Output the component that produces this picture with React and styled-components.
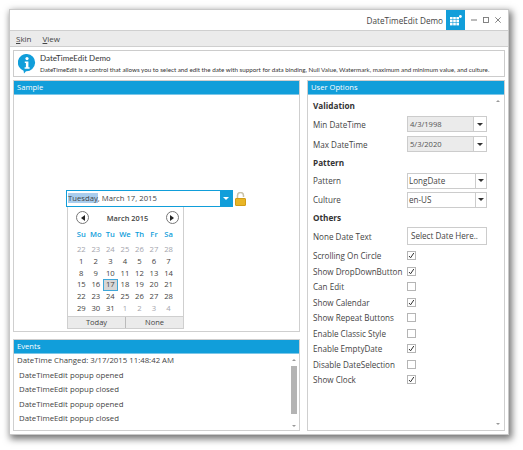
import React from 'react';
import styled, { createGlobalStyle } from 'styled-components';

const Global = createGlobalStyle`
  html, body { margin: 0; padding: 0; background: #fff; }
  body { font-family: "Open Sans", "Noto Sans", sans-serif; color: #3f3f3f; }
  * { box-sizing: border-box; }
`;
const Page = styled.div`width: 523px; height: 450px; padding: 9px 0 0 9px; overflow: hidden;`;
const Window = styled.div`
  width: 500px; height: 426px; background: #fff; border: 1px solid #c9c9c9;
  box-shadow: 2px 3px 7px 1px rgba(0,0,0,.55); display: flex; flex-direction: column;
`;
const TitleBar = styled.div`height: 20px; display: flex; align-items: center; justify-content: flex-end; flex: none;`;
const Title = styled.div`font-size: 8.2px; color: #444; margin-right: 3px; white-space: nowrap;`;
const SkinButton = styled.div`width: 19px; height: 20px; background: #119eda; display: flex; align-items: center; justify-content: center; margin-right: 6px;`;
const WinControls = styled.div`display: flex; align-items: center; gap: 6px; margin-right: 7px;`;
const MenuBar = styled.div`height: 17px; flex: none; background: #ebebeb; border-top: 1px solid #cfcfcf; border-bottom: 1px solid #cfcfcf; display: flex; gap: 11px; padding-left: 6px; align-items: center; font-size: 8px; color: #444;`;
const MenuKey = styled.span`text-decoration: underline; text-underline-offset: 1px;`;
const Content = styled.div`flex: 1; display: flex; flex-direction: column; padding: 3px; gap: 3px; min-height: 0;`;
const InfoBox = styled.div`height: 27px; flex: none; border: 1px solid #ccc; display: flex; align-items: center; padding-left: 4px; gap: 4px; overflow: hidden;`;
const InfoGlyph = styled.div`width: 18px; height: 20px; flex: none;`;
const InfoText = styled.div`display: flex; flex-direction: column; gap: 2px; white-space: nowrap; min-width: 0; font-family: "Lato", "Open Sans", sans-serif;`;
const InfoTitle = styled.div`font-size: 8px; line-height: 10px; color: #333;`;
const InfoDesc = styled.div`font-size: 6.26px; line-height: 9px; color: #333;`;
const Columns = styled.div`flex: 1; display: flex; gap: 7px; min-height: 0;`;
const LeftColumn = styled.div`width: 287px; display: flex; flex-direction: column; gap: 7px;`;
const Panel = styled.div`
  border: 1px solid #cfcfcf; display: flex; flex-direction: column; min-height: 0; overflow: hidden;
  ${p => p.$h ? `height: ${p.$h}px; flex: none;` : 'flex: 1;'}
`;
const PanelHead = styled.div`height: 14px; flex: none; background: #119eda; color: #fff; font-size: 7.6px; line-height: 13px; padding-left: 3px; border-bottom: 1px solid #7cc7e8;`;
const SampleBody = styled.div`flex: 1; padding: 95px 0 0 52px;`;
const DateRow = styled.div`display: flex; align-items: center; gap: 2px; height: 17px;`;
const DateInput = styled.div`width: 167px; height: 17px; border: 1px solid #119eda; display: flex; align-items: stretch;`;
const DateText = styled.div`flex: 1; font-size: 7.7px; line-height: 15px; padding-left: 1px; color: #444; white-space: nowrap;`;
const Selected = styled.span`background: #a9cdee;`;
const DateDrop = styled.div`width: 12px; background: #119eda; display: flex; align-items: center; justify-content: center;`;
const Arrow = styled.div`
  width: 0; height: 0; border-left: 3px solid transparent; border-right: 3px solid transparent;
  border-top: 3px solid ${p => p.$color || '#333'};
`;
const Popup = styled.div`margin-left: 1px; width: 117px; height: 122px; border: 1px solid #cfcfcf; border-top: none; display: flex; flex-direction: column;`;
const CalHead = styled.div`height: 21px; flex: none; display: flex; align-items: center; justify-content: space-between; padding: 0 4px 0 8px; font-size: 7.4px; font-weight: 600; color: #444;`;
const NavBtn = styled.div`width: 13px; height: 13px; border: 1px solid #777; border-radius: 50%; display: flex; align-items: center; justify-content: center;`;
const NavTri = styled.div`
  width: 0; height: 0; border-top: 3px solid transparent; border-bottom: 3px solid transparent;
  ${p => p.$left ? 'border-right: 4px solid #222;' : 'border-left: 4px solid #222;'}
`;
const CalGrid = styled.div`display: grid; grid-template-columns: repeat(7, 14.55px); grid-auto-rows: min-content; padding-left: 6px; flex: 1;`;
const DayName = styled.div`font-size: 7.6px; font-weight: 600; color: #119eda; text-align: center; height: 16px; line-height: 13px;`;
const Day = styled.div`
  font-size: 7.7px; text-align: center; height: 11.8px; line-height: 11.8px; color: ${p => p.$muted ? '#a5a5ad' : '#444'};
  ${p => p.$sel && 'background: #d6d6d6; outline: 1px solid #3fa7d8; outline-offset: -1px;'}
`;
const CalFoot = styled.div`height: 12px; flex: none; background: #ebebeb; border-top: 1px solid #cfcfcf; display: flex; font-size: 7.5px; line-height: 11px; color: #444;`;
const FootBtn = styled.div`flex: 1; text-align: center; & + & { border-left: 1px solid #bbb; }`;
const LogBody = styled.div`flex: 1; display: flex; min-height: 0; overflow: hidden;`;
const LogList = styled.div`flex: 1; overflow: hidden; padding-left: 3px; font-size: 7.8px; color: #444; white-space: nowrap;`;
const LogHead = styled.div`height: 14px; line-height: 12px;`;
const LogItem = styled.div`height: 14.25px; line-height: 14.25px; padding-left: 2px; ${p => p.$faded && 'opacity: .45;'}`;
const ScrollTrack = styled.div`width: 9px; margin-right: 1px; display: flex; flex-direction: column; align-items: center; flex: none; padding-top: 5px;`;
const ScrollThumb = styled.div`width: 6px; height: 48px; margin: 5px 0 11px; background: #b4b4b4;`;
const SmallUp = styled.div`width: 0; height: 0; border-left: 2px solid transparent; border-right: 2px solid transparent; border-bottom: 2px solid #999;`;
const SmallDown = styled(SmallUp)`border-bottom: none; border-top: 2px solid #999;`;
const OptionsBody = styled.div`flex: 1; display: flex; min-height: 0;`;
const OptionsList = styled.div`flex: 1; padding: 5px 0 0 5px; display: flex; flex-direction: column;`;
const OptScroll = styled.div`width: 9px; margin-right: 2px; display: flex; flex-direction: column; align-items: center; justify-content: space-between; padding: 5px 0;`;
const SectionHead = styled.div`font-size: 8.2px; font-weight: 700; color: #333; height: 14px; line-height: 12px; margin-top: ${p => p.$top || 0}px;`;
const Row = styled.div`display: flex; align-items: center; flex: none; height: ${p => p.$h}px; margin-top: ${p => p.$top || 0}px; font-size: 8.1px; color: #444; white-space: nowrap;`;
const RowLabel = styled.div`width: 94px; flex: none;`;
const Combo = styled.div`width: 80px; height: 16px; border: 1px solid #ccc; display: flex; align-items: stretch; font-size: ${p => p.$fs}px; line-height: 14px;`;
const ComboValue = styled.div`flex: 1; padding-left: ${p => p.$disabled ? 2 : 1}px; background: ${p => p.$disabled ? '#ebebeb' : '#fff'}; color: ${p => p.$disabled ? '#555' : '#444'};`;
const ComboBtn = styled.div`width: ${p => p.$w}px; border-left: 1px solid #ccc; display: flex; align-items: center; justify-content: center;`;
const TextField = styled.div`width: 80px; height: 18px; border: 1px solid #ccc; font-size: 8.1px; line-height: 16px; padding-left: 3px; overflow: hidden;`;
const CheckBox = styled.div`width: 9px; height: 9px; border: 1px solid #b5b5b5; display: flex; align-items: center; justify-content: center;`;

const GridIcon = () => (
  <svg width="12" height="11" viewBox="0 0 12 11">
    <g fill="#fff">
      <rect x="0" y="2" width="2.6" height="2.4" /><rect x="3.2" y="2" width="2.6" height="2.4" /><rect x="6.4" y="2" width="2.6" height="2.4" />
      <rect x="0" y="5" width="2.6" height="2.4" /><rect x="3.2" y="5" width="2.6" height="2.4" /><rect x="6.4" y="5" width="2.6" height="2.4" />
      <rect x="0" y="8" width="2.6" height="2.4" /><rect x="3.2" y="8" width="2.6" height="2.4" /><rect x="6.4" y="8" width="2.6" height="2.4" />
      <circle cx="10.4" cy="1.5" r="1.4" />
    </g>
  </svg>
);
const MinIcon = () => <svg width="6" height="6" viewBox="0 0 6 6"><path d="M0 3H6" stroke="#666" strokeWidth=".9" /></svg>;
const MaxIcon = () => <svg width="6" height="6" viewBox="0 0 6 6"><rect x=".5" y=".5" width="5" height="5" fill="none" stroke="#777" strokeWidth=".9" /></svg>;
const CloseIcon = () => <svg width="6" height="6" viewBox="0 0 6 6"><path d="M.3 .3L5.7 5.7M5.7 .3L.3 5.7" stroke="#777" strokeWidth=".9" /></svg>;
const InfoIcon = () => (
  <InfoGlyph>
    <svg width="18" height="20" viewBox="0 0 18 20">
      <path d="M9 0a8.6 8.6 0 1 1-1 17.2L6 19.4l-.4-2.7A8.6 8.6 0 0 1 9 0z" fill="#119eda" />
      <circle cx="9" cy="4.6" r="1.6" fill="#fff" />
      <path d="M6.8 7.6h3.6v5.6h1.2v1.5H6.6v-1.5h1.3V9.1H6.8z" fill="#fff" />
    </svg>
  </InfoGlyph>
);
const LockIcon = () => (
  <svg width="11" height="14" viewBox="0 0 11 14">
    <path d="M2.5 7V3.5a3 3 0 0 1 6 0V5" fill="none" stroke="#c9c2a8" strokeWidth="1.5" />
    <rect x=".5" y="6.5" width="10" height="7" rx=".5" fill="#e8b526" stroke="#d29c16" />
  </svg>
);
const Check = () => <svg width="7" height="7" viewBox="0 0 7 7"><path d="M1 4L2.6 5.8L5.8 1" fill="none" stroke="#333" strokeWidth="1" /></svg>;

const weeks = [
  [[22,1],[23,1],[24,1],[25,1],[26,1],[27,1],[28,1]],
  [[1],[2],[3],[4],[5],[6],[7]],
  [[8],[9],[10],[11],[12],[13],[14]],
  [[15],[16],[17,0,1],[18],[19],[20],[21]],
  [[22],[23],[24],[25],[26],[27],[28]],
  [[29],[30],[31],[1,1],[2,1],[3,1],[4,1]],
];
const checks = [
  ['Show DropDownButton', true], ['Can Edit', false], ['Show Calendar', true], ['Show Repeat Buttons', false],
  ['Enable Classic Style', false], ['Enable  EmptyDate', true], ['Disable DateSelection', false], ['Show Clock', true],
];

export default function App() {
  return (
    <Page>
      <Global />
      <Window>
        <TitleBar>
          <Title>DateTimeEdit Demo</Title>
          <SkinButton><GridIcon /></SkinButton>
          <WinControls><MinIcon /><MaxIcon /><CloseIcon /></WinControls>
        </TitleBar>
        <MenuBar>
          <span><MenuKey>S</MenuKey>kin</span>
          <span><MenuKey>V</MenuKey>iew</span>
        </MenuBar>
        <Content>
          <InfoBox>
            <InfoIcon />
            <InfoText>
              <InfoTitle>DateTimeEdit Demo</InfoTitle>
              <InfoDesc>DateTimeEdit is a control that allows you to select and edit the date with support for data binding, Null Value, Watermark, maximum and minimum value, and culture.</InfoDesc>
            </InfoText>
          </InfoBox>
          <Columns>
            <LeftColumn>
              <Panel $h={252}>
                <PanelHead>Sample</PanelHead>
                <SampleBody>
                  <DateRow>
                    <DateInput>
                      <DateText><Selected>Tuesday</Selected>, March 17, 2015</DateText>
                      <DateDrop><Arrow $color="#fff" /></DateDrop>
                    </DateInput>
                    <LockIcon />
                  </DateRow>
                  <Popup>
                    <CalHead>
                      <NavBtn><NavTri $left /></NavBtn>
                      March 2015
                      <NavBtn><NavTri /></NavBtn>
                    </CalHead>
                    <CalGrid>
                      {['Su','Mo','Tu','We','Th','Fr','Sa'].map(d => <DayName key={d}>{d}</DayName>)}
                      {weeks.flat().map(([n, muted, sel], i) => <Day key={i} $muted={muted} $sel={sel}>{n}</Day>)}
                    </CalGrid>
                    <CalFoot><FootBtn>Today</FootBtn><FootBtn>None</FootBtn></CalFoot>
                  </Popup>
                </SampleBody>
              </Panel>
              <Panel>
                <PanelHead>Events</PanelHead>
                <LogBody>
                  <LogList>
                    <LogHead>DateTime Changed: 3/17/2015 11:48:42 AM</LogHead>
                    <LogItem>DateTimeEdit popup opened</LogItem>
                    <LogItem>DateTimeEdit popup closed</LogItem>
                    <LogItem>DateTimeEdit popup opened</LogItem>
                    <LogItem>DateTimeEdit popup closed</LogItem>
                    <LogItem $faded>DateTimeEdit popup opened</LogItem>
                  </LogList>
                  <ScrollTrack><SmallUp /><ScrollThumb /><SmallDown /></ScrollTrack>
                </LogBody>
              </Panel>
            </LeftColumn>
            <Panel>
              <PanelHead>User Options</PanelHead>
              <OptionsBody>
                <OptionsList>
                  <SectionHead>Validation</SectionHead>
                  <Row $h={20}><RowLabel>Min DateTime</RowLabel><Combo $fs={7.6}><ComboValue $disabled>4/3/1998</ComboValue><ComboBtn $w={13}><Arrow /></ComboBtn></Combo></Row>
                  <Row $h={20}><RowLabel>Max DateTime</RowLabel><Combo $fs={7.6}><ComboValue $disabled>5/3/2020</ComboValue><ComboBtn $w={13}><Arrow /></ComboBtn></Combo></Row>
                  <SectionHead $top={3}>Pattern</SectionHead>
                  <Row $h={19}><RowLabel>Pattern</RowLabel><Combo $fs={8.1}><ComboValue>LongDate</ComboValue><ComboBtn $w={11}><Arrow /></ComboBtn></Combo></Row>
                  <Row $h={19}><RowLabel>Culture</RowLabel><Combo $fs={8.1}><ComboValue>en-US</ComboValue><ComboBtn $w={11}><Arrow /></ComboBtn></Combo></Row>
                  <SectionHead $top={3}>Others</SectionHead>
                  <Row $h={20}><RowLabel>None Date Text</RowLabel><TextField>Select Date Here..</TextField></Row>
                  <Row $h={15.5} $top={2}><RowLabel>Scrolling On Circle</RowLabel><CheckBox><Check /></CheckBox></Row>
                  {checks.map(([label, on]) => (
                    <Row key={label} $h={15.5}><RowLabel>{label}</RowLabel><CheckBox>{on && <Check />}</CheckBox></Row>
                  ))}
                </OptionsList>
                <OptScroll><SmallUp /><SmallDown /></OptScroll>
              </OptionsBody>
            </Panel>
          </Columns>
        </Content>
      </Window>
    </Page>
  );
}
